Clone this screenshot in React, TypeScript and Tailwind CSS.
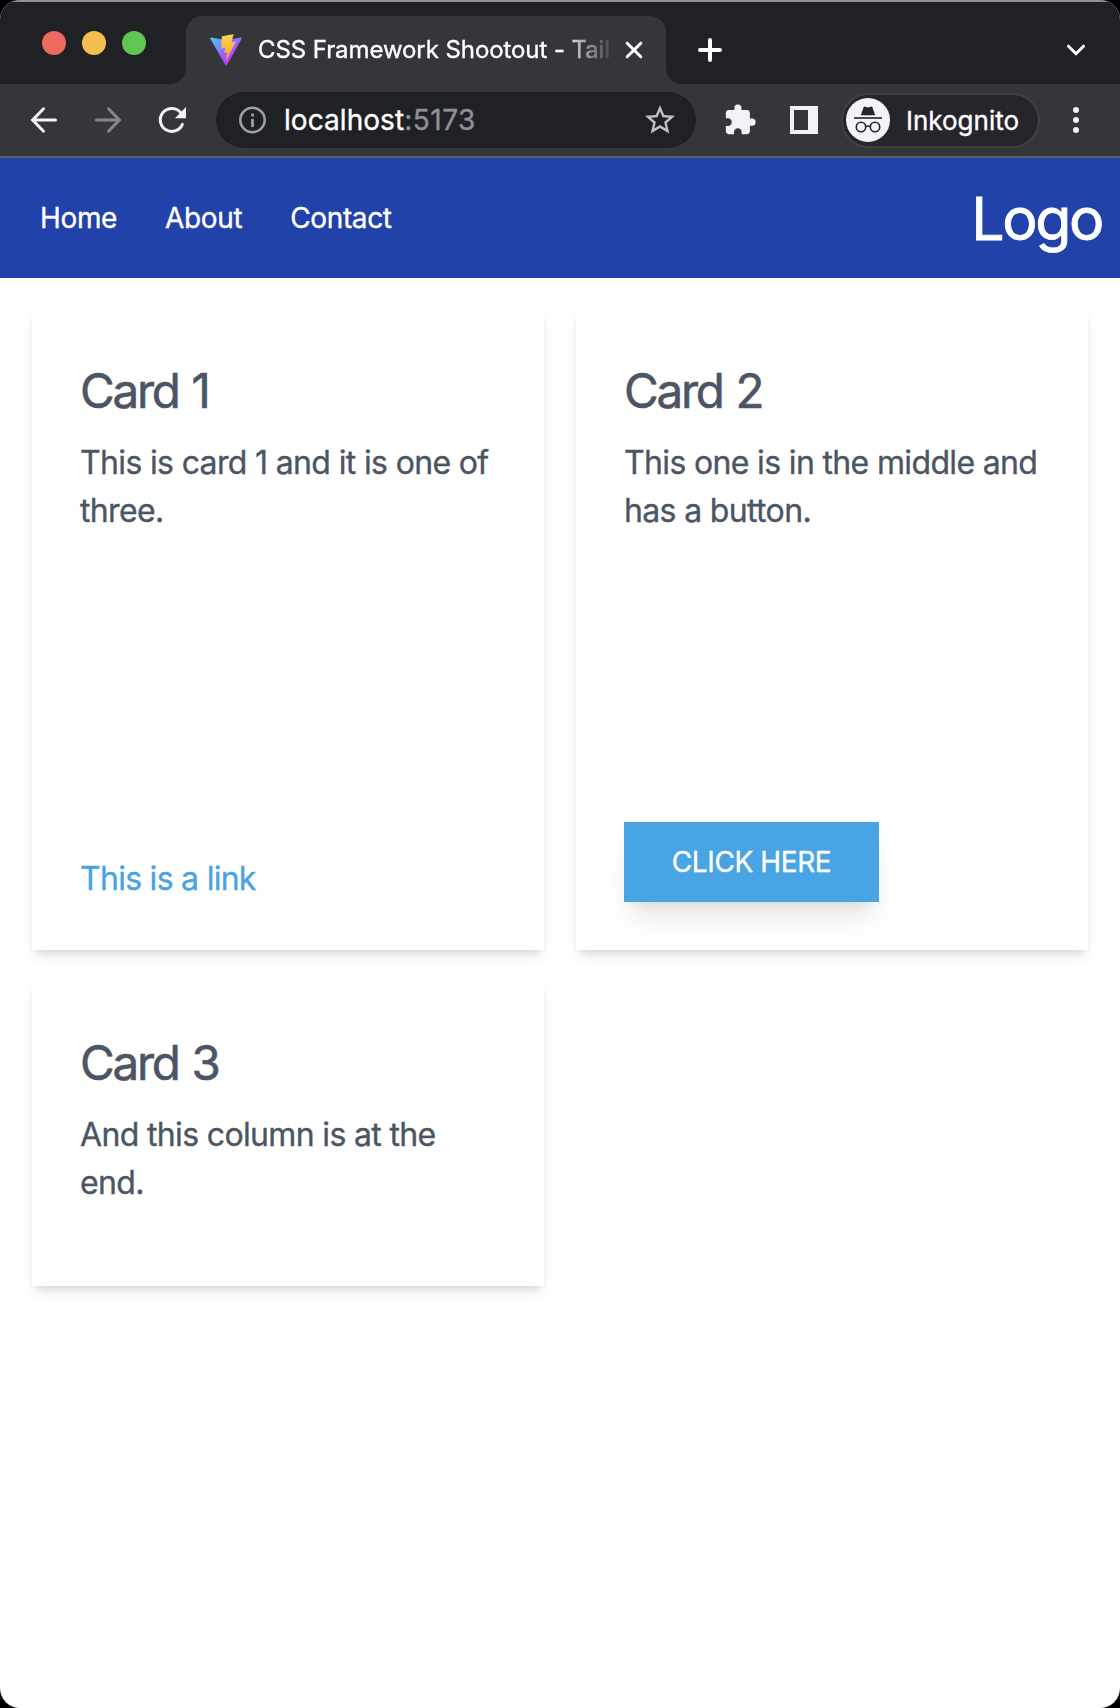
import React from "react";
import { MdExtension, MdStarBorder } from "react-icons/md";

function ViteLogo() {
  return (
    <svg className="h-8 w-8 shrink-0" viewBox="6 0 398 398" fill="none">
      <defs>
        <linearGradient id="v" x1="6" y1="33" x2="235" y2="344" gradientUnits="userSpaceOnUse">
          <stop stopColor="#41D1FF" />
          <stop offset="1" stopColor="#BD34FE" />
        </linearGradient>
        <linearGradient id="b" x1="194.651" y1="8.818" x2="236.076" y2="292.989" gradientUnits="userSpaceOnUse">
          <stop stopColor="#FFD95A" />
          <stop offset="0.1" stopColor="#FCCF50" />
          <stop offset="1" stopColor="#F2A33A" />
        </linearGradient>
      </defs>
      <path
        fill="url(#v)"
        d="M399.641 59.5246L215.643 388.545C211.844 395.338 202.084 395.378 198.228 388.618L10.5817 59.5563C6.38087 52.1896 12.6802 43.2665 21.0281 44.7586L205.223 77.6824C206.398 77.8924 207.601 77.8904 208.776 77.6763L389.119 44.8058C397.439 43.2894 403.768 52.1434 399.641 59.5246Z"
      />
      <path
        fill="url(#b)"
        d="M292.965 1.5744L156.801 28.2552C154.563 28.6937 152.906 30.5903 152.771 32.8664L144.395 174.33C144.198 177.662 147.258 180.248 150.51 179.498L188.42 170.749C191.967 169.931 195.172 173.055 194.443 176.622L183.18 231.775C182.422 235.487 185.907 238.661 189.532 237.56L212.947 230.446C216.577 229.344 220.065 232.527 219.297 236.242L201.398 322.875C200.278 328.294 207.486 331.249 210.492 326.603L212.5 323.5L323.454 102.072C325.312 98.3645 322.108 94.137 318.036 94.9228L279.014 102.454C275.347 103.161 272.227 99.746 273.262 96.1583L298.731 7.86689C299.767 4.27314 296.636 0.855181 292.965 1.5744Z"
      />
    </svg>
  );
}

function Arrow({ className }: { className: string }) {
  return (
    <svg className={className} viewBox="0 0 32 32" fill="none" stroke="currentColor" strokeWidth="3" strokeLinecap="round" strokeLinejoin="miter">
      <path d="M27.5 16H5" />
      <path d="M15.5 4.8L4.7 16L15.5 27.2" />
    </svg>
  );
}

function Reload() {
  return (
    <svg className="ml-8 h-8 w-8 text-[#f1f3f7]" viewBox="0 0 32 32" fill="none">
      <path d="M26.4 20.4A11.5 11.5 0 1 1 25 9" stroke="currentColor" strokeWidth="3" strokeLinecap="round" />
      <path d="M30 3V14.2H19Z" fill="currentColor" />
    </svg>
  );
}

function InfoIcon() {
  return (
    <svg className="h-7 w-7 shrink-0" viewBox="0 0 28 28" fill="none" stroke="#9aa0a6">
      <circle cx="13.5" cy="14" r="12.2" strokeWidth="2.6" />
      <path d="M13.5 13V21M13.5 7.6V10.4" strokeWidth="2.8" />
    </svg>
  );
}

function IncognitoIcon() {
  return (
    <svg className="h-11 w-11 shrink-0" viewBox="0 0 44 44" fill="none">
      <circle cx="22" cy="22" r="22" fill="#f1f3f7" />
      <path d="M14.8 17.3L17.6 9.3C17.9 8.6 18.5 8.4 19.2 8.7L22 9.6L24.8 8.7C25.5 8.4 26.1 8.6 26.4 9.3L29.2 17.3Z" fill="#26252b" />
      <path d="M8 20H36" stroke="#26252b" strokeWidth="1.6" />
      <g stroke="#26252b" strokeWidth="1.6">
        <circle cx="15" cy="29" r="4.7" />
        <circle cx="29" cy="29" r="4.7" />
        <path d="M19.7 28.6Q22 27.4 24.3 28.6" />
      </g>
    </svg>
  );
}

function TabStrip() {
  return (
    <div className="flex h-[84px] items-end border-t-2 border-[#8e9092] bg-[#202124]">
      <div className="mb-[29px] ml-[42px] flex w-[128px] gap-4">
        <span className="h-6 w-6 rounded-full bg-[#ed6a5e]" />
        <span className="h-6 w-6 rounded-full bg-[#f5bf4f]" />
        <span className="h-6 w-6 rounded-full bg-[#61c554]" />
      </div>
      <svg className="h-4 w-4" viewBox="0 0 16 16">
        <path d="M16 0V16H0A16 16 0 0 0 16 0Z" fill="#35363a" />
      </svg>
      <div className="flex h-[68px] w-[480px] items-center rounded-t-2xl bg-[#35363a] pl-6 text-white">
        <ViteLogo />
        <div className="ml-4 w-[352px] whitespace-nowrap text-[24px] tracking-[-0.08px] [mask-image:linear-gradient(to_right,black_302px,transparent_358px)]">
          CSS Framework Shootout - Tail
        </div>
        <svg className="ml-[14px] h-5 w-5" viewBox="0 0 20 20" stroke="currentColor" strokeWidth="3" strokeLinecap="round">
          <path d="M3.2 3.2L16.8 16.8M16.8 3.2L3.2 16.8" />
        </svg>
      </div>
      <svg className="h-4 w-4" viewBox="0 0 16 16">
        <path d="M0 0V16H16A16 16 0 0 1 0 0Z" fill="#35363a" />
      </svg>
      <svg className="mb-[21px] ml-[15px] h-[26px] w-[26px]" viewBox="0 0 26 26" stroke="white" strokeWidth="4" strokeLinecap="round">
        <path d="M13 3V23M3 13H23" />
      </svg>
      <svg className="mr-[33px] mb-[27px] ml-auto h-[14px] w-[22px]" viewBox="0 0 22 14" fill="none" stroke="white" strokeWidth="3" strokeLinecap="round">
        <path d="M3.5 3.2L11 10.7L18.5 3.2" />
      </svg>
    </div>
  );
}

function Toolbar() {
  return (
    <div className="flex h-[74px] items-center border-b-2 border-[#5c5d60] bg-[#35363a] pl-7">
      <Arrow className="h-8 w-8 text-[#f1f3f7]" />
      <Arrow className="ml-8 h-8 w-8 rotate-180 text-[#86878a]" />
      <Reload />
      <div className="ml-[28px] flex h-14 w-[480px] items-center rounded-full bg-[#202124] pr-[18px] pl-[23px]">
        <InfoIcon />
        <div className="ml-[17px] text-[28px] leading-8 tracking-[0.06px] text-white">
          localhost<span className="tracking-[0.5px] text-[#8f9195]">:5173</span>
        </div>
        <MdStarBorder className="ml-auto h-9 w-9 text-[#c0c1c3]" />
      </div>
      <MdExtension className="ml-[27px] h-[34px] w-[34px] text-[#f1f3f7]" />
      <div className="ml-[33px] h-7 w-7 border-4 border-r-[10px] border-[#f1f3f7]" />
      <div className="ml-[23px] flex h-[55px] w-[199px] items-center rounded-full border-2 border-[#414145] bg-[#26252b] pl-[3px]">
        <IncognitoIcon />
        <span className="mt-0.5 ml-4 text-[26px] leading-8 text-white">Inkognito</span>
      </div>
      <div className="ml-[33px] flex flex-col gap-[4px]">
        <span className="h-1.5 w-1.5 rounded-full bg-[#f1f3f7]" />
        <span className="h-1.5 w-1.5 rounded-full bg-[#f1f3f7]" />
        <span className="h-1.5 w-1.5 rounded-full bg-[#f1f3f7]" />
      </div>
    </div>
  );
}

type CardProps = { title: string; text: string; className: string; children?: React.ReactNode };

function Card({ title, text, className, children }: CardProps) {
  return (
    <article
      className={
        "flex flex-col items-start bg-white px-12 pt-[49px] pb-12 text-[#4b5563] shadow-[0_8px_12px_-2px_rgba(0,0,0,0.1),0_4px_8px_-4px_rgba(0,0,0,0.12)] " +
        className
      }
    >
      <h2 className="mb-4 text-[47.5px] leading-[64px] tracking-[-2.2px] [word-spacing:1.5px] [-webkit-text-stroke:0.6px]">{title}</h2>
      <p className="text-[32px] leading-[48px] whitespace-pre tracking-[-0.65px]">{text}</p>
      {children}
    </article>
  );
}

export default function App() {
  return (
    <div className="h-[1708px] w-[1120px] bg-black font-['Inter',sans-serif] [-webkit-text-stroke:0.35px]">
      <div className="h-full overflow-hidden rounded-[20px] bg-white">
        <TabStrip />
        <Toolbar />
        <nav className="flex h-[120px] items-center bg-[#2142a8] pr-[18px] pl-10 text-white">
          <div className="flex gap-12 text-[28px] leading-10 tracking-[-0.36px]">
            <a>Home</a>
            <a>About</a>
            <a>Contact</a>
          </div>
          <span className="mt-px ml-auto text-[59px] leading-[60px] tracking-[-2.4px] [-webkit-text-stroke:0.8px]">Logo</span>
        </nav>
        <main className="grid grid-cols-2 gap-8 p-8">
          <Card className="h-[640px]" title="Card 1" text={"This is card 1 and it is one of\nthree."}>
            <a className="mt-auto -mb-px text-[32px] leading-[48px] tracking-[-0.72px] text-[#48a3e0]">This is a link</a>
          </Card>
          <Card className="h-[640px]" title="Card 2" text={"This one is in the middle and\nhas a button."}>
            <button className="mt-auto h-20 w-[255px] bg-[#48a4e3] text-[28px] tracking-[-0.4px] text-white shadow-[0_20px_30px_-6px_rgba(0,0,0,0.1),0_8px_12px_-8px_rgba(0,0,0,0.1)]">
              CLICK HERE
            </button>
          </Card>
          <Card className="h-[304px]" title="Card 3" text={"And this column is at the\nend."} />
        </main>
      </div>
    </div>
  );
}
